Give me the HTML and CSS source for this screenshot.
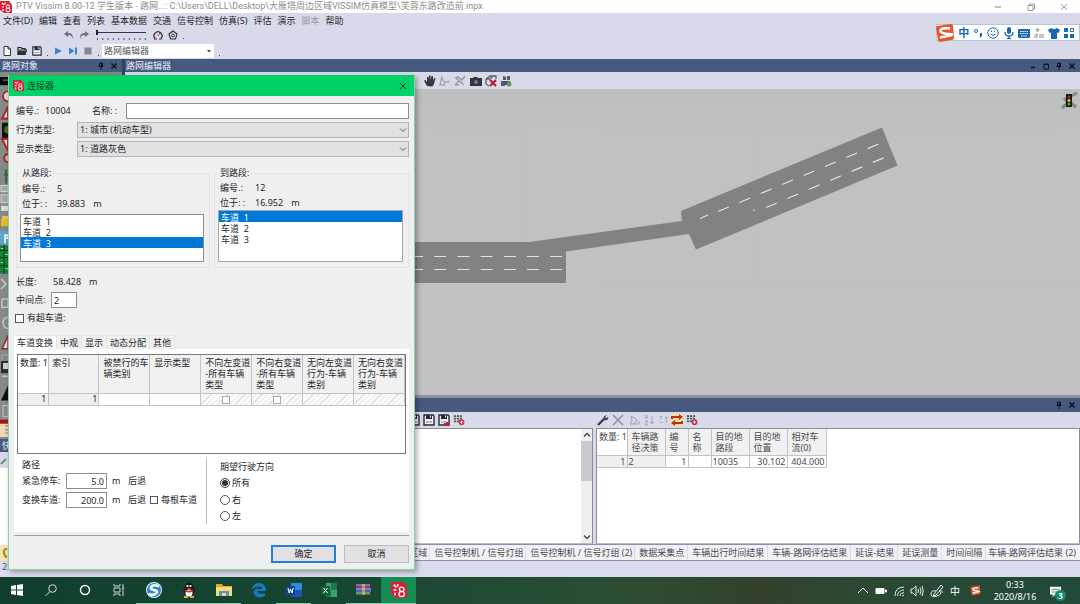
FILE: index.html
```html
<!DOCTYPE html>
<html lang="zh-CN">
<head>
<meta charset="utf-8">
<title>PTV Vissim 8.00-12</title>
<link rel="stylesheet" href="styles.css">
</head>
<body>
<svg class="defs" width="0" height="0" aria-hidden="true">
  <symbol id="vissim" viewBox="0 0 12 12"><path fill="#dc1f35" d="M0 0h9l3 4v8H4L0 9z"/><path d="M2 2l2 2M5 1.500v2M2 6h2M3 8v2" stroke="#fff" stroke-width="1.200"/><circle cx="8" cy="5.500" r="1.700" fill="none" stroke="#fff"/><circle cx="8" cy="9" r="2" fill="none" stroke="#fff"/></symbol>
  <symbol id="floppy" viewBox="0 0 12 12"><path d="M1 1h9l1 1v9H1z" fill="#eef" stroke="#2a2a32" stroke-width="1.400"/><path d="M3 1h6v4H3z" fill="#2a2a32"/><path d="M7 1.500h1v2H7z" fill="#fff"/><path d="M3 8h6" stroke="#889"/></symbol>
  <symbol id="pin" viewBox="0 0 8 8"><path d="M2.500 1h3v3h-3zM1.500 4.500h5M4 4.500V8" stroke="#10131f" fill="none"/><path d="M4 1h1.500v3H4z" fill="#10131f"/></symbol>
  <symbol id="cross" viewBox="0 0 8 8"><path d="M1.500 1.500l5 5m0-5l-5 5" stroke="#10131f" stroke-width="1.500"/></symbol>
  <symbol id="chev" viewBox="0 0 8 8"><path d="M1 2.500l3 3 3-3" fill="none" stroke="#666"/></symbol>
  <symbol id="tableAdd" viewBox="0 0 14 12"><path d="M1 1.500h10M1 4.500h10M1 7.500h6" stroke="#555" stroke-width="2" stroke-dasharray="2.500 1"/><circle cx="10" cy="8.500" r="3.300" fill="#c1273d"/><path d="M8 8.500h4M10 6.500v4" stroke="#fff"/></symbol>
  <symbol id="sogou" viewBox="0 0 20 20"><path d="M2 3l14-2q2 0 2 2l1 12q0 2-2 2L5 19q-2 0-2-2L1 5q0-2 1-2z" fill="#e4582b"/><path d="M15 5.500Q6 4.500 5.500 7.500T14 11t-9 3.500" fill="none" stroke="#fff" stroke-width="2.400"/></symbol>
</svg>

<header class="titlebar">
  <svg class="ic12"><use href="#vissim"/></svg>
  <span class="caption">PTV Vissim 8.00-12 学生版本 - 路网...: C:\Users\DELL\Desktop\大雁塔周边区域VISSIM仿真模型\芙蓉东路改造前.inpx</span>
  <div class="winbtns">
    <button aria-label="最小化"><svg viewBox="0 0 8 8"><path d="M1 4h6" stroke="#888"/></svg></button>
    <button aria-label="还原"><svg viewBox="0 0 8 8"><path d="M1 2.500h5v5H1zM2.500 2.500V1h5v5H6" fill="none" stroke="#888" stroke-width=".8"/></svg></button>
    <button aria-label="关闭"><svg viewBox="0 0 8 8"><path d="M1 1l6 6m0-6L1 7" stroke="#888" stroke-width=".8"/></svg></button>
  </div>
</header>

<div class="ribbon">
  <nav class="menu">
    <button>文件(D)</button><button>编辑</button><button>查看</button><button>列表</button><button>基本数据</button><button>交通</button><button>信号控制</button><button>仿真(S)</button><button>评估</button><button>演示</button><button disabled>脚本</button><button>帮助</button>
  </nav>
  <div class="tools tools-edit">
    <svg class="ic10" viewBox="0 0 10 10"><path d="M0 4l4-3v2c4 0 5 2 5 6C8 6 7 5 4 5v2z" fill="#70717c"/></svg>
    <svg class="ic10" viewBox="0 0 10 10"><path d="M10 4L6 1v2C2 3 1 5 1 9c1-3 2-4 5-4v2z" fill="#70717c"/></svg>
    <svg class="speed" viewBox="0 0 50 12"><path d="M1 3.500h49" stroke="#333644" stroke-width="1.200"/><path d="M0 1h2v5H0z" fill="#222"/><path d="M1 10h49" stroke="#555" stroke-width="2" stroke-dasharray="1 4.300"/></svg>
    <svg class="ic10" viewBox="0 0 10 10"><path d="M2 8.500A4 4 0 1 1 8 8.500" fill="none" stroke="#333" stroke-width="1.300"/><path d="M5 6l2-3" stroke="#b33"/><path d="M1 9h3M6 9h3" stroke="#333"/></svg>
    <svg class="ic10" viewBox="0 0 10 10"><path d="M5 1l4 3-1.500 5h-5L1 4z" fill="none" stroke="#333" stroke-width="1.200"/><circle cx="5" cy="5.500" r="1.400" fill="none" stroke="#333"/></svg>
    <span class="dot"></span>
  </div>
  <div class="tools tools-file">
    <svg class="ic10" viewBox="0 0 10 10"><path d="M2 .5h4l2.500 2.500v6.500H2zM6 .5V3h2.500" fill="#fff" stroke="#333"/></svg>
    <svg class="ic10" viewBox="0 0 10 10"><path d="M1 8.500V1.500h3l1 1h3V4M1 8.500L3 4h6.500L8 8.500z" fill="#ddd" stroke="#222" stroke-width="1.200"/><path d="M1 8.500L3 5h6L8 8.500z" fill="#333"/></svg>
    <svg class="ic10"><use href="#floppy"/></svg>
    <span class="dot"></span>
    <svg class="ic10" viewBox="0 0 10 10"><path d="M2 1.500l7 3.500-7 3.500z" fill="#3587cf"/></svg>
    <svg class="ic10" viewBox="0 0 10 10"><path d="M1 1.500L6.500 5 1 8.500zM7 1.500h2v7H7z" fill="#3587cf"/></svg>
    <svg class="ic10" viewBox="0 0 10 10"><path d="M1.500 1.500h7v7h-7z" fill="#85858f"/></svg>
    <span class="dot"></span>
    <span class="pick toolpick"><select aria-label="编辑器"><option>路网编辑器</option></select><svg viewBox="0 0 8 8"><path d="M2 3h4L4 5.500z" fill="#444"/></svg></span>
    <span class="dot"></span>
  </div>
</div>

<div class="workspace">
  <aside class="side">
    <div class="panehead"><h2>路网对象</h2><svg><use href="#pin"/></svg><svg><use href="#cross"/></svg></div>
    <svg class="objects" viewBox="0 0 122 362" preserveAspectRatio="xMinYMin slice" aria-hidden="true">
      <path d="M0 0h122v362H0z" fill="#858a86"/>
      <path d="M0 5h8v8H0z" fill="#0a0a0a"/><path d="M3 8h5" stroke="#888"/>
      <circle cx="8" cy="24" r="5" fill="#ddd" stroke="#b4282c" stroke-width="2"/>
      <path d="M2 46l6-12v12z" fill="#ddd" stroke="#a32930" stroke-width="2"/>
      <path d="M2 50h6v15H2z" fill="#111"/><circle cx="8" cy="57" r="4" fill="#5a6a18"/>
      <path d="M2 66h6v12z" fill="#ddd" stroke="#b4282c" stroke-width="2"/>
      <circle cx="8" cy="85" r="4" fill="#caa" stroke="#a32930" stroke-width="2"/>
      <path d="M4 101h5M6 96v14" stroke="#3f6540" stroke-width="2"/>
      <path d="M1 112h7v6H1zM1 121h7v8H1z" fill="#a3a8a5" stroke="#d2d6d3"/>
      <path d="M1 132h7v5H1z" fill="#d9dbd7"/>
      <path d="M1 145h7v7H1z" fill="#e2bb26"/><path d="M2 142h6v3H2z" fill="#eac84e"/>
      <path d="M0 157h8v13H0z" fill="#5da3d1"/><path d="M5 160v9M5 161h3v3H5" stroke="#fff" fill="none" stroke-width="1.500"/>
      <path d="M0 171h8v28H0z" fill="#16823b"/><path d="M0 176h8M0 183h8M0 191h8M4 171v28" stroke="#083f18"/><path d="M1 174h2M5 180h3M1 188h2M5 194h3" stroke="#9ee6a8"/>
      <path d="M1 204l5 5-5 5M2 224h6v8H2v-8M8 242q-6 1-5 6t5 5M2 296h6M2 300h6" stroke="#c4c8c5" stroke-width="1.500" fill="none"/>
      <path d="M2 273l6-13v13z" fill="#e6dcdc" stroke="#8e2930" stroke-width="1.500"/>
      <path d="M2 279h6v8H2z" fill="none" stroke="#a5aaa7"/>
      <path d="M1 285h7v12H1z" fill="#28332c"/><path d="M3 287h5v6H3z" fill="#ccd"/>
      <path d="M1 324l7-15v15z" fill="#0d0f0d"/><path d="M3 329h5v11H3z" fill="none" stroke="#c4c8c5"/>
      <path d="M0 343h8v4H0z" fill="#ae1018"/><path d="M0 347h8v13H0z" fill="#eed9b9"/><path d="M5 349h4v7H5M5 353h4" stroke="#8b8c3d" fill="none"/>
    </svg>
    <div class="panehead"><h2>快速查看</h2></div>
    <div class="striptools"><svg class="ic10" viewBox="0 0 10 10"><path d="M1 9l5-5" stroke="#658982" stroke-width="2"/></svg></div>
    <div class="quickview"></div>
    <div class="sidetabs"><svg class="ic10" viewBox="0 0 10 10"><path d="M7 1Q3 1 4 5t3 4" stroke="#a4872d" stroke-width="2" fill="none"/></svg></div>
  </aside>

  <main class="stage">
    <div class="panehead"><h2>路网编辑器</h2>
      <svg viewBox="0 0 8 8"><path d="M2 5.500h4" stroke="#10131f" stroke-width="1.500"/></svg>
      <svg viewBox="0 0 8 8"><path d="M2 2h4.500v5H2zM2 2.500h4.500" fill="none" stroke="#10131f"/></svg>
      <svg><use href="#pin"/></svg><svg><use href="#cross"/></svg></div>
    <div class="striptools nettools">
      <svg class="ic12" viewBox="0 0 12 12"><path d="M3 11Q1 8 0 5.500l1.500-.5L3 7V2h1.400v3L5 .6h1.500V5l1-4H9v5l1-3 1.500.5L10 9q-1 2-2 2.500z" fill="#37373f"/></svg>
      <svg class="ic12" viewBox="0 0 12 12"><path d="M3 1L1 10h4l1-3 5-.5M3 3l2 4" stroke="#a5a6b0" stroke-width="1.400" fill="none"/></svg>
      <svg class="ic12 wide" viewBox="0 0 12 12"><path d="M1 10l4-4-3-3 2-1 4 3 3-4M5 6l5 4M1 10h4" stroke="#999aa4" stroke-width="1.600" fill="none"/></svg>
      <svg class="ic12" viewBox="0 0 12 12"><path d="M0 3h3l1-1h3l1 1h4v8H0z" fill="#34343c"/><circle cx="6" cy="7" r="2" fill="#777985"/></svg>
      <svg class="ic12" viewBox="0 0 12 12"><path d="M1 4l4-3h6v3M1 4v5l3 2M1 4h4l3-3" stroke="#59656a" stroke-width="1.300" fill="none"/><path d="M5 5l6 6m0-6l-6 6" stroke="#b51632" stroke-width="2"/></svg>
      <svg class="ic12" viewBox="0 0 12 12"><path d="M3 1l3 1v3H3zM7 1h3v4H7zM1 6h4v5H1z" fill="#555a70"/><path d="M4 6h6v4H4z" fill="#4b4d79"/><circle cx="9" cy="9" r="2.500" fill="#69944d"/></svg>
    </div>
    <svg class="network" viewBox="125 89 955 306" preserveAspectRatio="xMinYMin slice" role="img" aria-label="路网">
      <defs><linearGradient id="ground" x2="0" y2="1"><stop offset="0" stop-color="#bcbebc"/><stop offset=".01" stop-color="#bdbfbe"/><stop offset=".04" stop-color="#c1c0c3"/><stop offset="1" stop-color="#c2c1c4"/></linearGradient></defs>
      <path d="M125 89h2000v900H125z" fill="url(#ground)"/>
      <path d="M523 128v110M432 128h92M600 128h460M755 110v180M600 283h480" stroke="#bdbcbf" fill="none"/>
      <g fill="#828184"><path d="M125 242h404l153-21-1-10 201-83.500 15.500 38L696 249.500 689 234l-123 17.500V283H125z"/></g>
      <g stroke="#e2e2e3" stroke-width="1.200" fill="none"><path d="M411 256.500h152M411 269.500h152" stroke-dasharray="12 11.200"/><path d="M700 218.500l8-3.500M718 211.500l163-68.500M753 210.500l2-.8M766 207.500l118-49.800" stroke-dasharray="11.700 11.500"/></g>
      <g transform="translate(1062 93)"><path d="M0 15l6-5-4-5M5 5L15 0M9 10l5 4" stroke="#858586" stroke-width="3" fill="none"/><path d="M4 1h6v13H4z" fill="#171a12"/><circle cx="7" cy="4" r="1.500" fill="#b52218"/><circle cx="7" cy="7.500" r="1.500" fill="#dbc828"/><circle cx="7" cy="11" r="1.500" fill="#31b91f"/></g>
    </svg>
    <div class="panehead lower"><svg><use href="#pin"/></svg><svg><use href="#cross"/></svg></div>
    <div class="lists">
      <section class="list-left">
        <div class="striptools end"><svg class="ic12"><use href="#floppy"/></svg><svg class="ic12"><use href="#floppy"/></svg><svg class="ic12" viewBox="0 0 12 12"><use href="#floppy"/><path d="M6 10h6M9.500 8v4" stroke="#b82233" stroke-width="2"/></svg><svg class="ic12"><use href="#tableAdd"/></svg></div>
        <div class="sheet scroll"><div class="bar"><svg viewBox="0 0 8 8"><path d="M1 5.500l3-3 3 3" fill="none" stroke="#444" stroke-width="1.300"/></svg><i></i><svg viewBox="0 0 8 8"><path d="M1 2.500l3 3 3-3" fill="none" stroke="#444" stroke-width="1.300"/></svg></div></div>
      </section>
      <section class="list-right">
        <div class="striptools">
          <svg class="ic12" viewBox="0 0 12 12"><path d="M1 11l6-6" stroke="#3d414f" stroke-width="2.400"/><path d="M10 1L8 3l1 1 2.500-1Q11 7 7 6 5 2 10 1z" fill="#3d414f"/></svg>
          <svg class="ic12 wide" viewBox="0 0 12 12"><path d="M1 1l10 10m0-10L1 11" stroke="#92939f" stroke-width="1.600"/></svg>
          <svg class="ic12" viewBox="0 0 12 12"><path d="M3 2l6 4-3 4H2l2-3zM6 10h5V7" stroke="#a0a1ab" fill="none"/></svg>
          <svg class="ic12" viewBox="0 0 12 12"><path d="M2 5l1.500-4L5 5M2 7h3l-3 4h3M9 2v8M7 8l2 2 2-2" stroke="#a0a1ab" fill="none"/></svg>
          <svg class="ic10" viewBox="0 0 12 12"><path d="M2 2h3M3.500 2v3M2 9h4M10 2v8M8 4l2-2 2 2" stroke="#a0a1ab" fill="none"/></svg>
          <svg class="ic12 sync" viewBox="0 0 12 12"><path d="M1 5V3h8M11 7v2H3" stroke="#b8300f" stroke-width="2" fill="none"/><path d="M8 0l4 3-4 3zM4 6L0 9l4 3z" fill="#b8300f"/></svg>
          <svg class="ic12"><use href="#tableAdd"/></svg>
        </div>
        <div class="sheet">
          <table class="grid results">
            <colgroup><col class="c30"><col class="c38"><col class="c23"><col class="c23"><col class="c38"><col class="c38"><col class="c39"></colgroup>
            <thead><tr><th class="corner">数量: 1</th><th>车辆路径决策</th><th>编号</th><th>名称</th><th>目的地路段</th><th>目的地位置</th><th>相对车流(0)</th></tr></thead>
            <tbody><tr><td class="num fixed">1</td><td class="fixed">2</td><td class="num">1</td><td></td><td>10035</td><td class="num">30.102</td><td class="num">404.000</td></tr></tbody>
          </table>
        </div>
      </section>
    </div>
    <div class="doctabs"><button>区域</button><button>信号控制机 / 信号灯组</button><button>信号控制机 / 信号灯组 (2)</button><button>数据采集点</button><button>车辆出行时间结果</button><button>车辆-路网评估结果</button><button>延误-结果</button><button>延误测量</button><button>时间间隔</button><button>车辆-路网评估结果 (2)</button></div>
  </main>
</div>
<div class="status">2559.0:1556.0</div>

<footer class="taskbar">
  <div class="apps">
    <button aria-label="开始"><svg viewBox="0 0 14 14"><path d="M1 3l5-1v4.500H1zM7 2l6-1v5.500H7zM1 7.500h5V12l-5-1zM7 7.500h6V13l-6-1z" fill="#fff"/></svg></button>
    <button aria-label="搜索"><svg viewBox="0 0 14 14"><circle cx="8.500" cy="5.500" r="3.800" fill="none" stroke="#ddd"/><path d="M6 8.500L1.500 13" stroke="#ddd"/></svg></button>
    <button aria-label="语音助手"><svg viewBox="0 0 14 14"><circle cx="7" cy="7" r="4.500" fill="none" stroke="#fff" stroke-width="1.500"/></svg></button>
    <button aria-label="任务视图"><svg viewBox="0 0 14 14"><path d="M2 1v2h6V1M2 5h6v4H2zM2 13v-2h6v2M11 1v12M10 5h2" fill="none" stroke="#cdd5d0"/></svg></button>
    <button class="open" aria-label="搜狗浏览器"><svg viewBox="0 0 16 16"><circle cx="8" cy="8" r="8" fill="#e6f2fb"/><circle cx="8" cy="8" r="7" fill="#2b83cf"/><path d="M13 4.500Q8 2 5.500 4.500T8 8t2 3.500-7.500.5" stroke="#fff" stroke-width="2.600" fill="none"/></svg></button>
    <button class="open" aria-label="QQ"><svg viewBox="0 0 16 16"><ellipse cx="8" cy="9" rx="5.500" ry="5" fill="#181818"/><circle cx="8" cy="5" r="4.300" fill="#181818"/><ellipse cx="8" cy="11" rx="3.500" ry="3.500" fill="#fff"/><path d="M4 7.500q4 2.500 8 0v2q-4 2-8 0z" fill="#d72b25"/><circle cx="6.500" cy="4" r="1.100" fill="#fff"/><circle cx="9.500" cy="4" r="1.100" fill="#fff"/><path d="M5.500 6.500q2.500 1.500 5 0zM3 14h4v2H3zM9 14h4v2H9z" fill="#eea32b"/></svg></button>
    <button class="open" aria-label="文件资源管理器"><svg viewBox="0 0 16 16"><path d="M0 2h6l1 2h9v10H0z" fill="#dba72c"/><path d="M0 5h16v9H0z" fill="#f8db76"/><path d="M3 9h10v5h-3v-3H6v3H3z" fill="#5297c5"/></svg></button>
    <button aria-label="Edge"><svg viewBox="0 0 16 16"><path d="M1 8Q2 1 8 1q7 0 7 8H6q1 3 5 3 2 0 3-1v3Q4 18 2.500 10 5 5 9 5 5 3 1 8z" fill="#1878c8"/><path d="M6 7h5q0-3-2.500-2.500T6 7z" fill="#174333"/></svg></button>
    <button class="open" aria-label="Word"><svg viewBox="0 0 16 16"><path d="M5 1h11v14H5z" fill="#2e8be0"/><path d="M5 8h11v7H5z" fill="#1b54af"/><path d="M0 4h9v9H0z" fill="#124193"/><path d="M2 6l1.200 5L4.500 7 6 11l1.200-5" stroke="#fff" fill="none"/></svg></button>
    <button aria-label="Excel"><svg viewBox="0 0 16 16"><path d="M5 1h11v14H5z" fill="#36a66d"/><path d="M10 1h6v7h-6zM5 8h5v7H5z" fill="#20784b"/><path d="M0 4h9v9H0z" fill="#126339"/><path d="M2.500 6l4 5m0-5l-4 5" stroke="#fff"/></svg></button>
    <button class="open" aria-label="WinRAR"><svg viewBox="0 0 16 16"><path d="M0 2h14v4H0z" fill="#84388d"/><path d="M0 6h15v4H0z" fill="#466ba7"/><path d="M0 10h14v3H0z" fill="#42783b"/><path d="M6 2h3v11H6z" fill="#bf985d"/><path d="M0 3h14M0 7h15M0 11h14" stroke="#d3c3d5" stroke-width=".7"/></svg></button>
    <button class="open current" aria-label="Vissim"><svg viewBox="0 0 16 16"><use href="#vissim"/></svg></button>
  </div>
  <div class="tray">
    <svg viewBox="0 0 14 14"><path d="M2 9l5-5 5 5" stroke="#fff" fill="none"/></svg>
    <svg viewBox="0 0 14 14"><path d="M2 4.500h8v5H2zM11.500 6h1v2h-1z" fill="#fff" stroke="#fff"/></svg>
    <svg viewBox="0 0 14 14"><path d="M3 12Q3 3 12 3M5.500 12Q6 6 12 6M8 12q0-3 4-3.500M10 12l2-1" stroke="#dfe8e2" fill="none"/></svg>
    <svg viewBox="0 0 14 14"><path d="M1 5h2l3-3v10L3 9H1zM8 5q1 2 0 4M10 3.500q2 3.500 0 7M12 2q2.500 5 0 10" stroke="#e6ede9" fill="none"/></svg>
    <svg viewBox="0 0 14 14" class="pen"><path d="M4 10l7-9 2 2-7 8-3 1zM6 7q-5-1-5 3t6 2 2-5M9 7q4-1 3 2" stroke="#e6ede9" fill="none"/></svg>
    <span class="ime">中</span>
    <svg viewBox="0 0 20 20" class="sg"><use href="#sogou"/></svg>
    <time class="clock">0:33<br>2020/8/16</time>
    <button class="notes" aria-label="通知"><svg viewBox="0 0 16 14"><path d="M1 1h13v9H7l-3 3v-3H1z" fill="#f3f6f4"/><path d="M3 4h9M3 7h9" stroke="#557c67"/></svg><b>3</b></button>
  </div>
</footer>

<div class="imebar">
  <svg class="logo"><use href="#sogou"/></svg>
  <b>中</b>
  <svg viewBox="0 0 12 12"><circle cx="4" cy="4" r="1.500" fill="none" stroke="#1769b5"/><path d="M8 6h2v3L8 11z" fill="#1769b5"/></svg>
  <svg viewBox="0 0 12 12"><circle cx="6" cy="6" r="5.200" fill="none" stroke="#1769b5"/><path d="M3.500 7q2.500 3 5 0M4.500 3.500v1.500M7.500 3.500v1.500" stroke="#1769b5" fill="none"/></svg>
  <svg viewBox="0 0 12 12"><rect x="4" width="4" height="7" rx="2" fill="#1769b5"/><path d="M2 5q0 4 4 4t4-4M6 9v3M4 11.500h4" stroke="#1769b5" fill="none" stroke-width="1.300"/></svg>
  <svg viewBox="0 0 12 12"><rect y="2" width="12" height="9" rx="1" fill="#1769b5"/><path d="M2 4.500h8M2 6.500h8M3 9h6" stroke="#fff" stroke-dasharray="1.500 .8"/></svg>
  <svg viewBox="0 0 12 12"><circle cx="4.500" cy="3" r="2" fill="#bbb"/><path d="M1 11q0-5 4-5v5zM6 7h5v4H6z" fill="#c4c4c4"/></svg>
  <svg viewBox="0 0 12 12"><path d="M0 3l3-2q3 2 6 0l3 2-1.500 3L9 5.500V12H3V5.500L1.500 6z" fill="#1769b5"/></svg>
  <svg viewBox="0 0 12 12"><path d="M1 1h4v4H1zM1 7h4v4H1zM7 7h4v4H7z" fill="#1769b5"/><path d="M7.500 1.500h3v3h-3z" fill="none" stroke="#1769b5"/></svg>
</div>

<form class="dialog" role="dialog" aria-labelledby="dlg-title">
  <div class="dlg-head"><svg class="ic12"><use href="#vissim"/></svg><h1 id="dlg-title">连接器</h1><button type="button" aria-label="关闭"><svg viewBox="0 0 8 8"><path d="M1 1l6 6m0-6L1 7" stroke="#123c23"/></svg></button></div>
  <div class="dlg-body">
    <div class="fields">
      <div class="row"><span class="lab">编号.:</span><span class="idno">10004</span><label for="nm">名称: :</label><input id="nm" class="grow" type="text"></div>
      <div class="row"><label for="beh" class="wlab">行为类型:</label><span class="pick grow"><select id="beh"><option>1: 城市 (机动车型)</option></select><svg><use href="#chev"/></svg></span></div>
      <div class="row"><label for="dis" class="wlab">显示类型:</label><span class="pick grow"><select id="dis"><option>1: 道路灰色</option></select><svg><use href="#chev"/></svg></span></div>
    </div>
    <div class="groups">
      <fieldset class="from"><legend>从路段:</legend>
        <div class="kv"><span>编号.:</span><span>5</span></div>
        <div class="kv"><span>位于: :</span><span>39.883</span><span>m</span></div>
        <select size="4" aria-label="从路段车道"><option>车道&nbsp; 1</option><option>车道&nbsp; 2</option><option selected>车道&nbsp; 3</option></select>
      </fieldset>
      <fieldset class="to"><legend>到路段:</legend>
        <div class="kv"><span>编号.:</span><span>12</span></div>
        <div class="kv"><span>位于: :</span><span>16.952</span><span>m</span></div>
        <select size="4" aria-label="到路段车道"><option selected>车道&nbsp; 1</option><option>车道&nbsp; 2</option><option>车道&nbsp; 3</option></select>
      </fieldset>
    </div>
    <div class="extra">
      <div class="row"><span class="mlab">长度:</span><span class="len">58.428</span><span>m</span></div>
      <div class="row"><label class="mlab" for="mid">中间点:</label><input id="mid" class="tiny" type="text" value="2"></div>
      <label class="row check"><input type="checkbox">有超车道:</label>
    </div>
    <div class="tabs" role="tablist"><button type="button" role="tab" aria-selected="true">车道变换</button><button type="button" role="tab">中观</button><button type="button" role="tab">显示</button><button type="button" role="tab">动态分配</button><button type="button" role="tab">其他</button></div>
    <div class="panel">
      <div class="tablebox">
        <table class="grid lanes">
          <colgroup><col class="c30"><col><col><col><col><col><col><col></colgroup>
          <thead><tr><th class="corner">数量: 1</th><th>索引</th><th>被禁行的车辆类别</th><th>显示类型</th><th>不向左变道<br>-所有车辆类型</th><th>不向右变道<br>-所有车辆类型</th><th>无向左变道行为-车辆类别</th><th>无向右变道行为-车辆类别</th></tr></thead>
          <tbody><tr><td class="num fixed">1</td><td class="num fixed">1</td><td></td><td></td><td class="off"><input type="checkbox" disabled aria-label="不向左变道"></td><td class="off"><input type="checkbox" disabled aria-label="不向右变道"></td><td class="off"></td><td class="off"></td></tr></tbody>
        </table>
      </div>
      <div class="route">
        <div class="route-left">
          <span>路径</span>
          <div class="row"><label for="stop">紧急停车:</label><input id="stop" type="text" value="5.0"><span class="unit">m</span><span>后退</span></div>
          <div class="row"><label for="chg">变换车道:</label><input id="chg" type="text" value="200.0"><span class="unit">m</span><span>后退</span><label class="each"><input type="checkbox">每根车道</label></div>
        </div>
        <div class="route-right" role="radiogroup" aria-label="期望行驶方向">
          <span>期望行驶方向</span>
          <label><input type="radio" name="dir" checked>所有</label>
          <label><input type="radio" name="dir">右</label>
          <label><input type="radio" name="dir">左</label>
        </div>
      </div>
    </div>
    <div class="actions"><button type="button" class="ok">确定</button><button type="button">取消</button></div>
  </div>
</form>
</body>
</html>
```
FILE: styles.css
```css
* { box-sizing: border-box; }
body {
  margin: 0;
  min-height: 100vh;
  display: flex;
  flex-direction: column;
  position: relative;
  overflow: hidden;
  background: #d8dae9;
  color: #25262c;
  font: 9px/12px "Noto Sans", "Noto Sans CJK SC", sans-serif;
}
button, input, select { font: inherit; color: inherit; margin: 0; padding: 0; border: 0; background: none; border-radius: 0; outline: 0; }
h1, h2 { margin: 0; font: inherit; }
svg { display: block; flex: none; }
.defs { position: absolute; }
.ic10 { width: 10px; height: 10px; }
.ic12 { width: 12px; height: 12px; }

.titlebar { display: flex; align-items: center; gap: 4px; height: 13px; background: #fff; color: #8d8d8d; }
.caption { flex: 1; white-space: nowrap; line-height: 13px; font-family: Roboto, "Noto Sans CJK SC", sans-serif; }
.winbtns { display: flex; }
.winbtns button { width: 33px; display: flex; justify-content: center; }
.winbtns svg { width: 8px; height: 8px; }

.ribbon { height: 46px; background: #d8dae9; display: flex; flex-direction: column; padding-top: 1px; }
.menu { display: flex; gap: 6px; padding-left: 3px; height: 13px; }
.menu button { white-space: nowrap; line-height: 13px; }
.menu button:disabled { color: #9698a4; }
.tools { display: flex; align-items: center; }
.tools-edit { height: 15px; gap: 5px; padding-left: 64px; }
.speed { width: 50px; height: 12px; margin: 0 2px; }
.tools-file { height: 17px; gap: 5px; padding-left: 2px; }
.dot { width: 1px; height: 1px; background: #444; align-self: flex-end; margin-bottom: 3px; }
.dot + .pick { margin-left: -2px; }
.pick { display: grid; }
.pick > * { grid-area: 1 / 1; }
.pick svg { width: 8px; height: 8px; justify-self: end; align-self: center; margin-right: 1px; pointer-events: none; }
.pick select { appearance: none; width: 100%; }
.toolpick { width: 112px; }
.toolpick select { background: #fff; height: 14px; padding-left: 2px; color: #55565e; }

.workspace { flex: 1; display: flex; }
.side { width: 122px; display: flex; flex-direction: column; }
.stage { flex: 1; min-width: 0; display: flex; flex-direction: column; border-left: 3px solid #34415f; }
.panehead { display: flex; align-items: center; gap: 5px; height: 13px; padding: 0 4px 0 2px; background: #47597f; color: #e9edf7; }
.panehead h2 { flex: 1; line-height: 13px; white-space: nowrap; }
.panehead svg { width: 8px; height: 8px; }
.stage > .panehead { padding-left: 1px; }
.side .panehead + .striptools { height: 16px; }
.objects { width: 100%; flex: 1 1 0; min-height: 0; }
.quickview { height: 77px; background: #fff; }
.sidetabs { height: 16px; padding-top: 3px; background: #f6e4ae; }
.striptools { display: flex; align-items: center; height: 16px; gap: 3px; background: #d8dae9; }
.nettools { height: 17px; padding-left: 299px; }
.striptools .wide { margin-right: 1px; }
.network { width: 100%; flex: 1 1 0; min-height: 0; }
.panehead.lower { height: 17px; justify-content: flex-end; border-top: 3px solid #899597; }
.lists { display: flex; height: 133px; gap: 3px; border-bottom: 1px solid #8b90b0; }
.list-left { width: 468px; display: flex; flex-direction: column; }
.list-right { flex: 1; display: flex; flex-direction: column; }
.list-right .striptools { padding-left: 1px; }
.striptools.end { justify-content: flex-end; padding-right: 128px; }
.sync { background: #fbdca5; }
.sheet { flex: 1; background: #fff; border: 1px solid #8b8c9b; border-bottom-color: #bbb; }
.scroll { display: flex; justify-content: flex-end; }
.bar { width: 11px; background: #efeff2; display: flex; flex-direction: column; align-items: center; padding: 2px 0; }
.bar svg { width: 8px; height: 8px; }
.bar i { width: 11px; height: 40px; background: #cbcad0; margin: 2px 0 auto; }
.doctabs { height: 16px; display: flex; justify-content: flex-end; gap: 2px; padding-right: 4px; background: #f1f1f5; border-bottom: 1px solid #8992ad; overflow: hidden; }
.doctabs button { white-space: nowrap; padding: 0 3px 0 2px; border-right: 1px solid #dcdce4; color: #494a50; }
.doctabs button:last-child { border: 0; padding: 0; }
.doctabs button:nth-child(-n+3) { padding-right: 2px; }
.status { height: 16px; padding-left: 2px; background: #d8dcec; color: #54586a; }

.grid { border-collapse: collapse; table-layout: fixed; line-height: 11px; }
.grid th { font-weight: 400; text-align: left; vertical-align: top; padding: 2px 2px 2px 4px; background: #f1f1f2; border: solid #c3c3c7; border-width: 0 1px 1px 0; white-space: normal; word-break: break-all; }
.grid th.corner { background: #fff; padding: 2px 0 0 2px; white-space: nowrap; }
.grid td { padding: 0 2px 0 1px; height: 12px; border: solid #c3c3c7; border-width: 0 1px 1px 0; }
.grid td.num { text-align: right; padding: 0 1px; }
.grid td.fixed { background: #efeff0; }
.results { width: 229px; color: #4a4b50; }
.results thead tr { height: 26px; }
.c30 { width: 30px; } .c39 { width: 39px; } .c23 { width: 23px; } .c38 { width: 38px; }

.taskbar { height: 27px; display: flex; justify-content: space-between; background: linear-gradient(90deg, #113f2d, #164632 30%, #2c4e35 58%, #33402e 70%, #2b4933 80%, #214a39); color: #fff; }
.apps { display: flex; }
.apps button { width: 35px; height: 27px; display: flex; align-items: center; justify-content: center; border-bottom: 1px solid transparent; }
.apps button:nth-child(-n+4) { width: 34px; }
.apps button svg { width: 16px; height: 16px; }
.apps button:nth-child(-n+4) svg { width: 14px; height: 14px; }
.apps .open { border-color: #82cdb0; }
.apps .current { background: #168b54; }
.tray { display: flex; align-items: center; gap: 4px; }
.tray svg { width: 14px; height: 14px; }
.tray .pen { margin-left: 2px; }
.tray .sg { width: 11px; height: 11px; margin-left: 6px; }
.ime { font-size: 10px; margin-left: 2px; }
.clock { width: 60px; text-align: center; }
.notes { width: 31px; height: 20px; position: relative; }
.notes svg { width: 14px; height: 12px; margin-top: 2px; }
.notes b { position: absolute; left: 6px; top: 9px; width: 11px; height: 11px; border-radius: 50%; background: #168b6a; color: #fff; font-size: 8px; line-height: 11px; }

.imebar { position: absolute; right: 0; top: 24px; height: 17px; width: 144px; display: flex; align-items: center; justify-content: space-between; padding-right: 4px; background: #fff; border: 1px solid #b9c2d6; color: #1769b5; }
.imebar svg { width: 12px; height: 12px; }
.imebar b { font-size: 11px; }
.imebar .logo { width: 20px; height: 20px; margin-left: -2px; }

.dialog { position: absolute; left: 8px; top: 75px; width: 407px; background: #f0eff0; border: 1px solid #8fcfae; border-top: 0; box-shadow: 2px 2px 5px #0005; white-space: nowrap; }
.dlg-head { height: 21px; display: flex; align-items: center; gap: 3px; padding: 0 7px 0 4px; background: #00d068; color: #0d4023; }
.dlg-head .ic12 { width: 11px; height: 11px; }
.dlg-head h1 { flex: 1; }
.dlg-head button svg { width: 8px; height: 8px; }
.dlg-body { padding: 7px 5px 6px 5px; }
.row { display: flex; align-items: center; height: 16px; }
.grow { flex: 1; }
.fields { display: grid; gap: 3px; padding-left: 2px; }
.lab { width: 29px; }
.idno { width: 47px; }
.fields .wlab { width: 61px; }
.dialog input[type="text"] { background: #fff; border: 1px solid #8d8d92; height: 16px; padding: 0 2px; min-width: 0; }
.dialog #nm { margin-left: 9px; }
.dialog .pick { height: 16px; }
.dialog .pick select { height: 16px; background: #e1e0e2; border: 1px solid #b5b4b8; padding-left: 2px; }
.dialog .pick svg { margin-right: 2px; }
.groups { display: grid; grid-template-columns: 194px 1fr; gap: 4px; margin-top: 9px; padding-left: 2px; }
fieldset { margin: 0; border: 1px solid #e4e4e6; padding: 1px 5px 5px 3px; display: flex; flex-direction: column; min-width: 0; height: 102px; }
legend { padding: 0 2px; line-height: 14px; }
.kv { display: flex; height: 15px; line-height: 15px; padding-left: 2px; }
.kv span:first-child { width: 35px; }
.kv span + span + span { margin-left: 8px; }
fieldset select { flex: 1; width: 100%; background: #fff; border: 1px solid #8d8d92; overflow: hidden; }
.from select { margin-top: 3px; }
.to { padding-top: 0; }
.to select { border-color: #a5a5aa; margin-right: 0; }
fieldset option { min-height: 11px; height: 11px; line-height: 11px; padding: 0 2px; font-size: 9px; }
fieldset option:checked { background: #0078d7 linear-gradient(#0078d7, #0078d7); color: #fff; -webkit-text-fill-color: #fff; }
.extra { display: grid; gap: 2px; padding: 6px 0 0 2px; }
.mlab { width: 35px; }
.len { width: 36px; margin-left: 2px; }
.extra .tiny { width: 26px; height: 16px; }
.check { gap: 3px; margin-left: -1px; }
input[type="checkbox"] { appearance: none; width: 9px; height: 9px; border: 1px solid #55555a; background: #fff; flex: none; }
.tabs { display: flex; height: 14px; margin-top: 9px; }
.tabs button { padding: 1px 3px 0; border: 1px solid #e3e3e5; border-width: 1px 1px 0 0; background: #f1f0f1; }
.tabs button[aria-selected] { background: #fff; padding-top: 0; }
.panel { background: #fff; padding: 5px 3px 0 3px; height: 183px; }
.tablebox { height: 100px; border: 1px solid #77777c; background: #fff; overflow: hidden; }
.lanes { width: 100%; }
.lanes thead tr { height: 38px; }
.lanes td { line-height: 10px; }
.lanes th { padding-right: 0; }
.lanes td.off { text-align: center; background: repeating-linear-gradient(135deg, #fff 0 3px, #d5d5d7 3px 4px); }
.lanes td input { display: block; margin: 1px auto 0; width: 8px; height: 8px; border-color: #aaa; }
.route { display: grid; grid-template-columns: 190px 1fr; margin-top: 4px; }
.route-left { border-right: 1px solid #bcbcc0; height: 66px; padding-left: 5px; display: grid; grid-template-rows: 14px 18px 20px; align-items: center; }
.route-left > .row > label:first-child { width: 44px; }
.route-left input[type="text"] { width: 41px; text-align: right; }
.unit { width: 21px; padding-left: 5px; }
.each { display: flex; align-items: center; gap: 3px; margin-left: 4px; }
.each input { width: 8px; height: 8px; }
.route-right { display: grid; grid-template-rows: 17px 16px 17px 16px; align-items: center; padding-left: 13px; }
.route-right label { display: flex; align-items: center; gap: 2px; }
input[type="radio"] { appearance: none; width: 10px; height: 10px; border: 1px solid #55555a; border-radius: 50%; background: #fff; }
input[type="radio"]:checked { background: #333; box-shadow: inset 0 0 0 1px #fff; }
.actions { display: flex; justify-content: flex-end; gap: 8px; margin-top: 3px; padding-top: 9px; border-top: 1px solid #a2a2a6; }
.actions button { width: 65px; height: 18px; background: #e1e0e2; border: 1px solid #bdbdc1; }
.actions .ok { border: 2px solid #2280cf; }
```
